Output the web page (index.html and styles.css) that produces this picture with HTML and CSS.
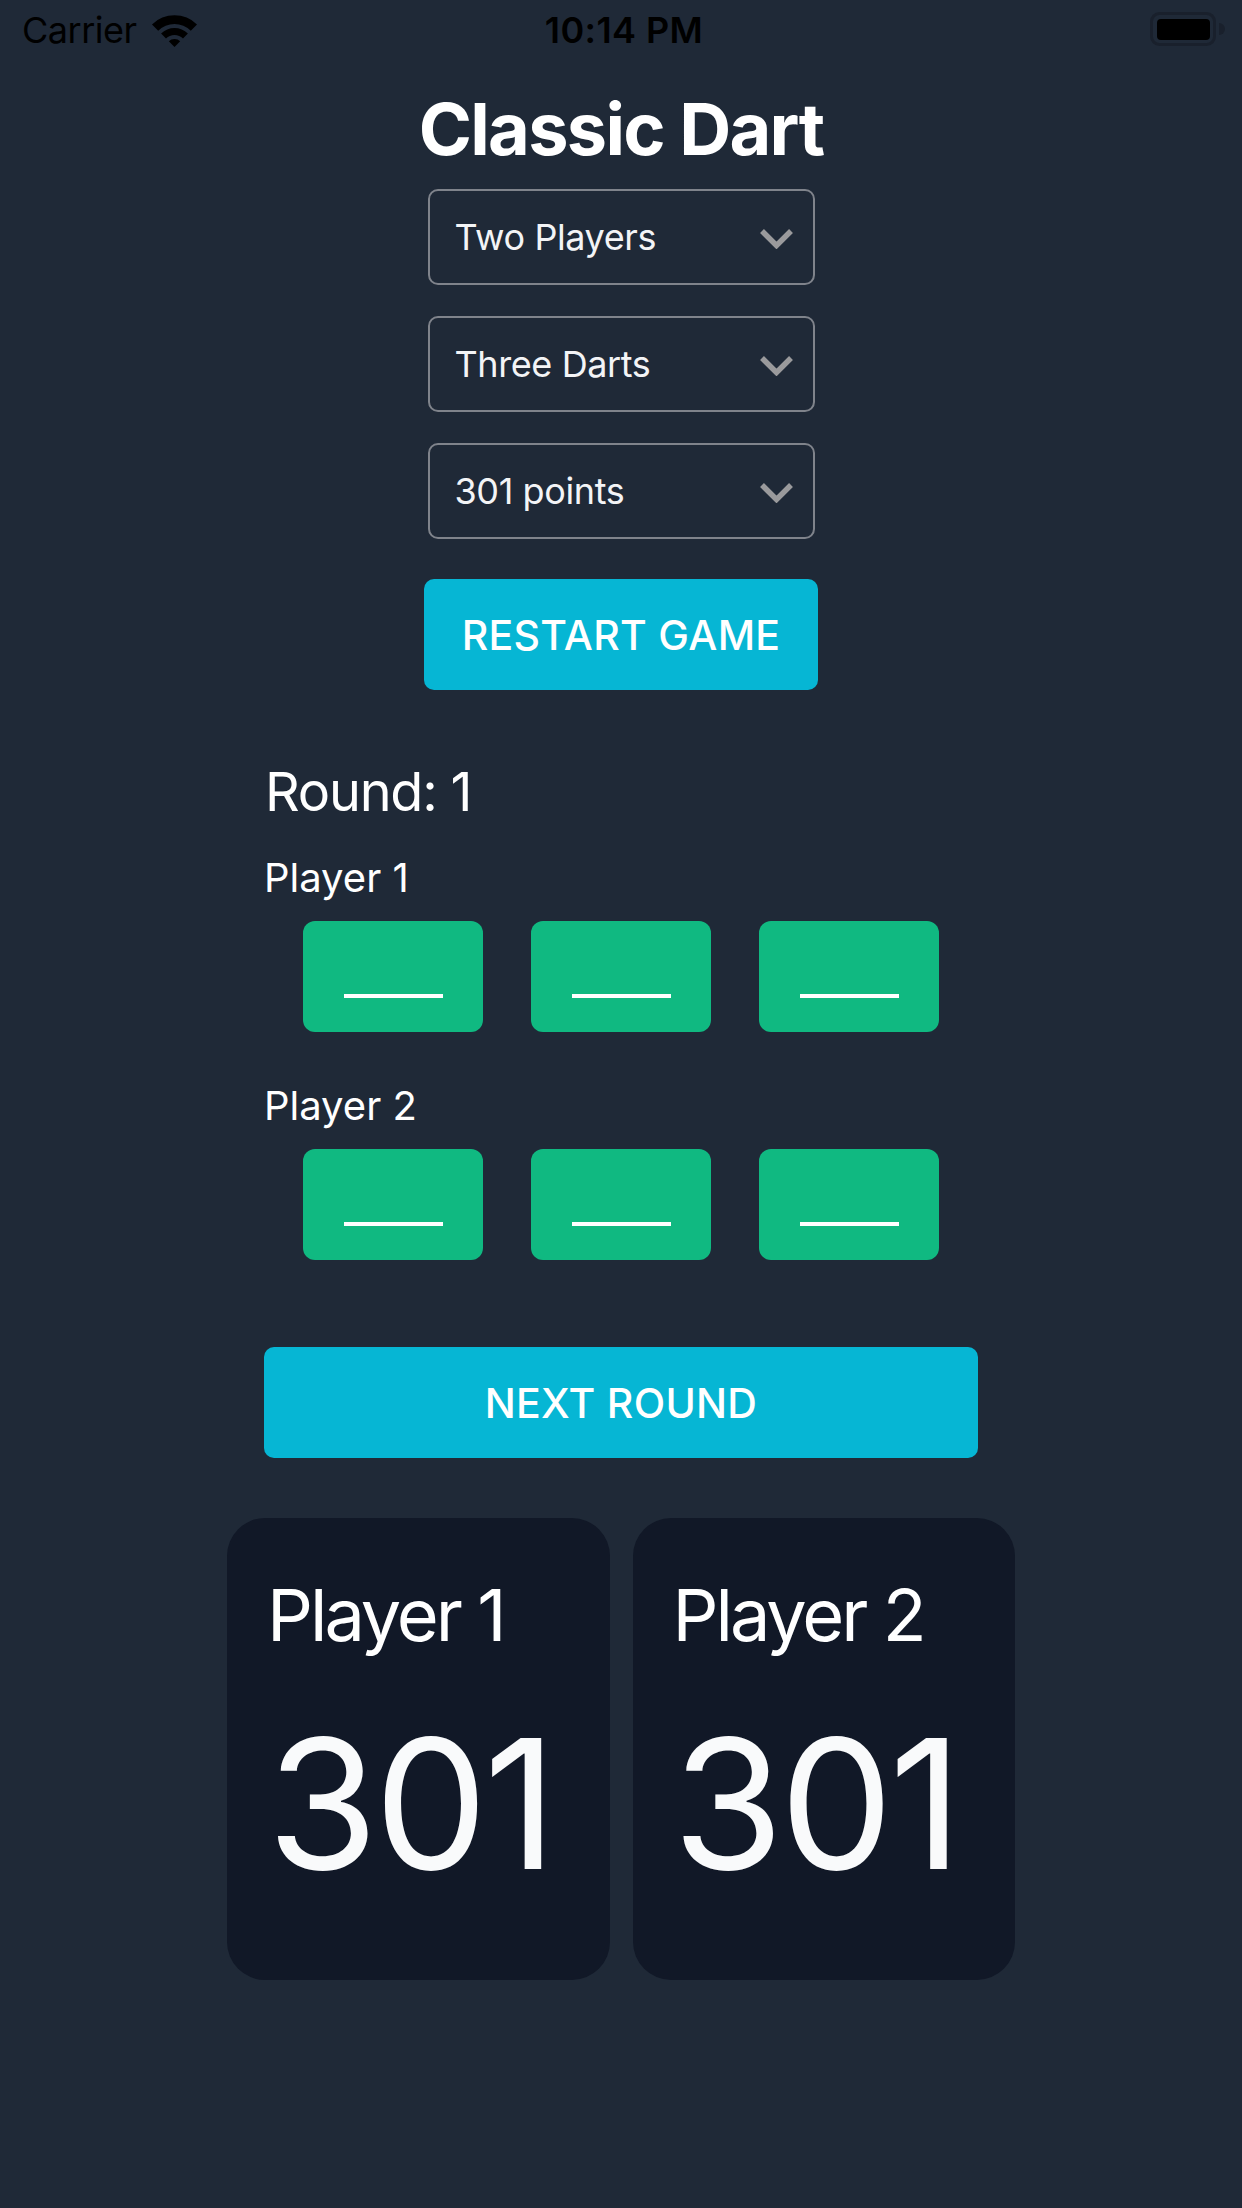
FILE: index.html
```html
<!DOCTYPE html>
<html lang="en">
<head>
<meta charset="utf-8">
<title>Classic Dart</title>
<link rel="stylesheet" href="styles.css">
</head>
<body>
<div class="status">
  <div class="status-left">
    <span class="carrier">Carrier</span>
    <svg class="wifi" viewBox="-1 0 47 33" width="47" height="33">
      <path d="M0 10.4 A32 32 0 0 1 45 10.4 L38.8 16.7 A23 23 0 0 0 6.2 16.7 Z"/>
      <path d="M9.1 19.6 A19 19 0 0 1 35.9 19.6 L31 24.5 A12 12 0 0 0 14 24.5 Z"/>
      <path d="M16.8 27.3 A8 8 0 0 1 28.2 27.3 L22.5 33 Z"/>
    </svg>
  </div>
  <div class="time">10:14 PM</div>
  <div class="status-right">
    <svg class="battery" viewBox="0 0 76 36" width="76" height="36">
      <rect x="1.5" y="1.5" width="63" height="31" rx="8" fill="none" stroke="#19202c" stroke-width="3"/>
      <rect x="7" y="7" width="53" height="21" rx="4" fill="#000"/>
      <path d="M69 11 a6 6 0 0 1 0 12 z" fill="#19202c"/>
    </svg>
  </div>
</div>

<main class="app">
  <h1 class="title">Classic Dart</h1>

  <div class="select"><span>Two Players</span><svg class="chev" viewBox="0 0 35 21" width="35" height="21"><polyline points="3,3 17.5,17.5 32,3"/></svg></div>
  <div class="select"><span>Three Darts</span><svg class="chev" viewBox="0 0 35 21" width="35" height="21"><polyline points="3,3 17.5,17.5 32,3"/></svg></div>
  <div class="select"><span>301 points</span><svg class="chev" viewBox="0 0 35 21" width="35" height="21"><polyline points="3,3 17.5,17.5 32,3"/></svg></div>

  <button class="btn restart">RESTART GAME</button>

  <section class="round">
    <div class="round-label">Round: 1</div>

    <div class="player-label">Player 1</div>
    <div class="darts">
      <div class="dart"><span class="blank"></span></div>
      <div class="dart"><span class="blank"></span></div>
      <div class="dart"><span class="blank"></span></div>
    </div>

    <div class="player-label second">Player 2</div>
    <div class="darts">
      <div class="dart"><span class="blank"></span></div>
      <div class="dart"><span class="blank"></span></div>
      <div class="dart"><span class="blank"></span></div>
    </div>

    <button class="btn next">NEXT ROUND</button>
  </section>

  <div class="scores">
    <div class="card">
      <div class="card-name">Player 1</div>
      <div class="card-score">301</div>
    </div>
    <div class="card">
      <div class="card-name">Player 2</div>
      <div class="card-score">301</div>
    </div>
  </div>
</main>
</body>
</html>
```

FILE: styles.css
```css
* { box-sizing: border-box; }

html, body {
  margin: 0;
  padding: 0;
  background: #1f2937;
}

body {
  width: 1242px;
  min-height: 2208px;
  font-family: Inter, "Noto Sans", "Liberation Sans", sans-serif;
  color: #ffffff;
}

/* status bar */
.status {
  height: 60px;
  display: grid;
  grid-template-columns: 1fr auto 1fr;
  align-items: center;
  padding: 0 16px 0 22px;
  color: #000;
  font-size: 36px;
  line-height: 60px;
}
.status-left {
  display: flex;
  align-items: center;
  gap: 14px;
}
.carrier { font-weight: 400; letter-spacing: -0.5px; }
.wifi { fill: #000; }
.time { font-weight: 600; letter-spacing: 0.4px; }
.status-right {
  display: flex;
  justify-content: flex-end;
  align-items: center;
}

/* main column */
.app {
  display: flex;
  flex-direction: column;
  align-items: center;
}

.title {
  margin: 33px 0 0;
  font-size: 72px;
  line-height: 72px;
  font-weight: 700;
  letter-spacing: -1.7px;
}

.select {
  width: 387px;
  height: 96px;
  margin-top: 31px;
  border: 2px solid #7f838b;
  border-radius: 10px;
  display: flex;
  align-items: center;
  justify-content: space-between;
  padding: 0 19px 0 25px;
  font-size: 36px;
  color: #f3f4f6;
  letter-spacing: -0.4px;
}
.select:first-of-type { margin-top: 24px; }
.chev {
  fill: none;
  stroke: #9a9a9c;
  stroke-width: 5.5;
  stroke-linejoin: miter;
  margin-top: 3px;
}

.btn {
  border: none;
  color: #ffffff;
  background: #06b6d4;
  font-family: inherit;
  font-weight: 500;
  font-size: 41px;
  border-radius: 10px;
  height: 111px;
  padding: 0;
}
.restart {
  width: 394px;
  margin-top: 40px;
  letter-spacing: 0.3px;
}

/* round section */
.round {
  width: 714px;
  margin-top: 69px;
  display: flex;
  flex-direction: column;
}
.round-label {
  font-size: 54px;
  line-height: 65px;
  letter-spacing: -1.2px;
  padding-left: 1px;
}
.player-label {
  margin-top: 30px;
  font-size: 40px;
  line-height: 48px;
  letter-spacing: 0;
  padding-left: 0;
}
.player-label.second { margin-top: 50px; }

.darts {
  margin-top: 19px;
  display: flex;
  justify-content: center;
  gap: 48px;
}
.dart {
  width: 180px;
  height: 111px;
  background: #10b981;
  border-radius: 12px;
  display: flex;
  justify-content: center;
  padding-top: 73px;
}
.blank {
  width: 99px;
  height: 4px;
  background: #ffffff;
}

.next {
  width: 714px;
  margin-top: 87px;
  letter-spacing: 0.3px;
}

/* scores */
.scores {
  margin-top: 60px;
  width: 788px;
  display: flex;
  gap: 23px;
}
.card {
  flex: 1;
  height: 462px;
  background: #111827;
  border-radius: 38px;
  padding: 53px 0 0 40px;
}
.card-name {
  font-size: 72px;
  line-height: 87px;
  letter-spacing: -3px;
}
.card-score {
  margin-top: 37px;
  font-size: 180px;
  line-height: 218px;
  color: #f9fafb;
  letter-spacing: -4px;
}
```
